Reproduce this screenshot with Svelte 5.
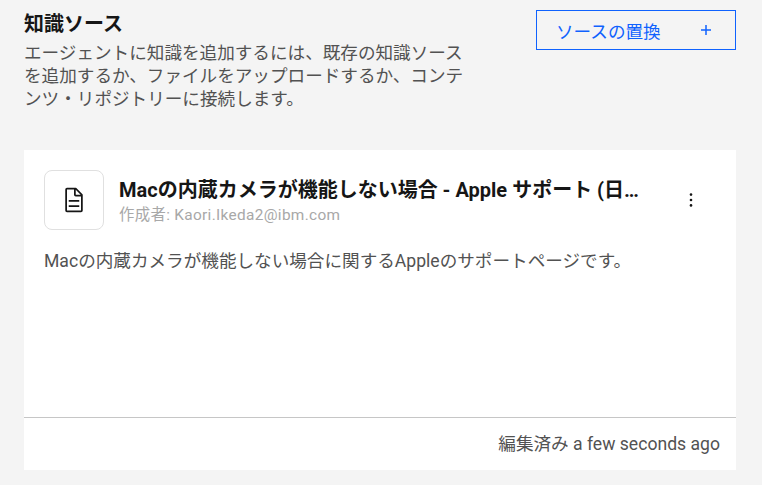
<script>
    const title = "Macの内蔵カメラが機能しない場合 - Apple サポート (日本)";
</script>

<div class="page">
    <header class="top">
        <div class="intro">
            <h2>知識ソース</h2>
            <p>エージェントに知識を追加するには、既存の知識ソースを追加するか、ファイルをアップロードするか、コンテンツ・リポジトリーに接続します。</p>
        </div>
        <button class="replace">
            <span>ソースの置換</span>
            <svg width="16" height="16" viewBox="0 0 16 16" fill="currentColor"><path d="M8.75 3h-1.5v4.25H3v1.5h4.25V13h1.5V8.75H13v-1.5H8.75z"/></svg>
        </button>
    </header>

    <section class="card">
        <div class="body">
            <div class="head">
                <div class="tile">
                    <svg width="28" height="28" viewBox="0 0 32 32" fill="#161616"><path d="M25.7 9.3l-7-7A.9.9 0 0 0 18 2H8a2 2 0 0 0-2 2v24a2 2 0 0 0 2 2h16a2 2 0 0 0 2-2V10a.9.9 0 0 0-.3-.7zM18 4.4l5.6 5.6H18zM24 28H8V4h8v6a2 2 0 0 0 2 2h6z"/><path d="M10 22h12v2H10zM10 16h12v2H10z"/></svg>
                </div>
                <div class="names">
                    <div class="name">{title}</div>
                    <div class="author">作成者: Kaori.Ikeda2@ibm.com</div>
                </div>
                <button class="more" aria-label="more">
                    <svg width="16" height="16" viewBox="0 0 16 16" fill="#161616"><circle cx="8" cy="2.6" r="1.3"/><circle cx="8" cy="8" r="1.3"/><circle cx="8" cy="13.4" r="1.3"/></svg>
                </button>
            </div>
            <p class="desc">Macの内蔵カメラが機能しない場合に関するAppleのサポートページです。</p>
        </div>
        <footer>編集済み a few seconds ago</footer>
    </section>
</div>

<style>
    :global(body) {
        background: #f4f4f4;
    }

    .page {
        width: 762px;
        height: 485px;
        box-sizing: border-box;
        padding: 10px 26px 15px 24px;
        display: flex;
        flex-direction: column;
        gap: 39px;
        font-family: "Roboto", "Noto Sans CJK JP", sans-serif;
    }

    .top {
        display: flex;
        justify-content: space-between;
        align-items: flex-start;
    }

    .intro {
        width: 445px;
    }

    h2 {
        margin: 0 0 4px;
        font-size: 20px;
        line-height: 28px;
        font-weight: 700;
        color: #161616;
    }

    .intro p {
        margin: 0;
        font-size: 17.6px;
        line-height: 23px;
        color: #525252;
    }

    .replace {
        width: 200px;
        height: 40px;
        box-sizing: border-box;
        display: flex;
        align-items: center;
        justify-content: space-between;
        padding: 0 21px 0 19px;
        background: transparent;
        border: 1px solid #0f62fe;
        color: #0f62fe;
        font: inherit;
        font-size: 17.6px;
    }

    .card {
        flex: 1;
        display: flex;
        flex-direction: column;
        background: #fff;
    }

    .body {
        flex: 1;
        padding: 20px;
    }

    .head {
        display: flex;
        align-items: center;
        gap: 15px;
    }

    .tile {
        width: 60px;
        height: 60px;
        box-sizing: border-box;
        flex: none;
        display: flex;
        align-items: center;
        justify-content: center;
        border: 1px solid #e0e0e0;
        border-radius: 8px;
    }

    .names {
        width: 526px;
        min-width: 0;
        align-self: flex-start;
        margin-top: 7px;
    }

    .name {
        font-size: 20px;
        line-height: 26px;
        font-weight: 700;
        color: #161616;
        white-space: nowrap;
        overflow: hidden;
        text-overflow: ellipsis;
    }

    .author {
        font-size: 15.4px;
        line-height: 24px;
        letter-spacing: 0.32px;
        color: #a8a8a8;
    }

    .more {
        margin-left: 19px;
        padding: 0;
        width: 24px;
        height: 24px;
        display: flex;
        align-items: center;
        justify-content: center;
        background: none;
        border: none;
    }

    .desc {
        margin: 18px 0 0;
        font-size: 17.6px;
        line-height: 26px;
        color: #525252;
    }

    footer {
        border-top: 1px solid #c6c6c6;
        height: 53px;
        box-sizing: border-box;
        padding: 0 16px 3px;
        display: flex;
        align-items: center;
        justify-content: flex-end;
        font-size: 17.6px;
        color: #525252;
    }
</style>
